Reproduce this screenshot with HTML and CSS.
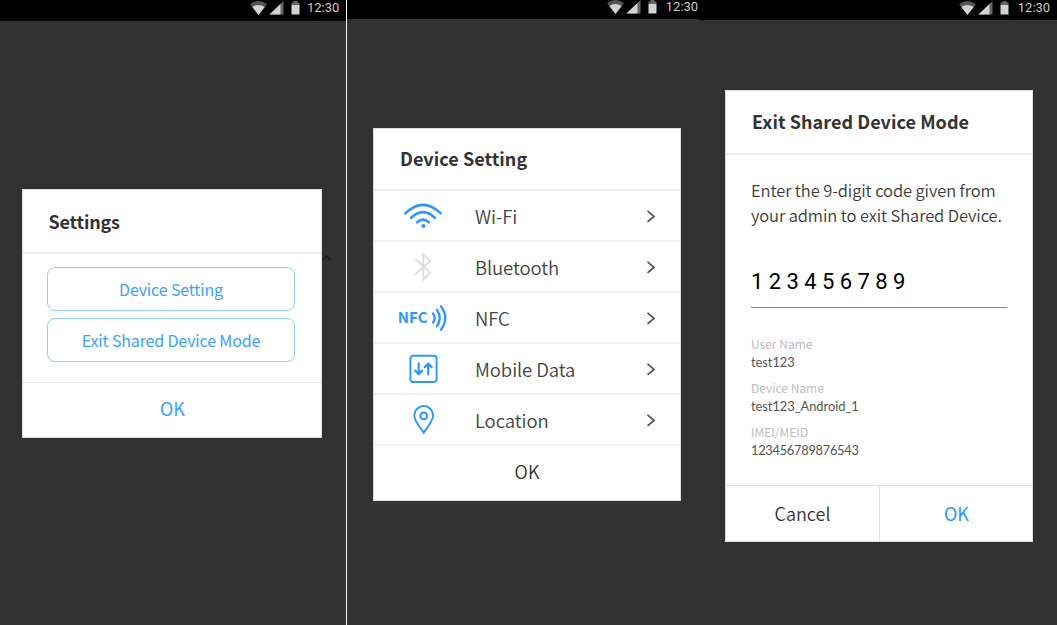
FILE: index.html
```html
<!DOCTYPE html>
<html lang="en">
<head>
<meta charset="utf-8">
<title>Shared Device Settings</title>
<link rel="stylesheet" href="styles.css">
</head>
<body>
<svg class="defs" width="0" height="0">
  <symbol id="status" viewBox="0 0 50 14">
    <path d="M0 3.2Q8.500-3 17 3.200L8.500 14Z" fill="#555"/>
    <path d="M2.300 6Q8.500 1.800 14.700 6L8.500 14Z" fill="#d2d2d2"/>
    <path d="M33.500 0V13.500H19.500Z" fill="#666"/>
    <path d="M30.500 3V13.500H19.500Z" fill="#d2d2d2"/>
    <path d="M41.500 1.500H43.500V0H47.500V1.500H49.500V4.500H41.500Z" fill="#666"/>
    <path d="M41.500 4H49.500V13.500H41.500Z" fill="#d2d2d2"/>
  </symbol>
  <symbol id="chevron" viewBox="0 0 10 14">
    <path d="M1.500 1.900L8 7.400L1.500 12.900" fill="none" stroke="#505050" stroke-width="1.700"/>
  </symbol>
</svg>
<main class="screens">
  <section class="screen screen-settings">
    <header class="status"><svg class="status-icons"><use href="#status"/></svg><span class="clock">12:30</span></header>
    <div class="dialog">
      <h2 class="title">Settings</h2>
      <div class="actions">
        <button class="outline">Device Setting</button>
        <button class="outline">Exit Shared Device Mode</button>
      </div>
      <button class="ok">OK</button>
      <svg class="caret" viewBox="0 0 9 6"><path d="M.5 5.500L4.500 1L8.500 5.500" fill="none" stroke="#181818" stroke-width="1.200"/></svg>
    </div>
  </section>
  <section class="screen screen-device">
    <header class="status"><svg class="status-icons"><use href="#status"/></svg><span class="clock">12:30</span></header>
    <div class="dialog">
      <h2 class="title">Device Setting</h2>
      <ul class="list">
        <li class="row">
          <svg class="icon" viewBox="0 0 50 32" fill="none" stroke="#2d96ff" stroke-width="2.600" stroke-linecap="round"><path d="M7.300 13.400Q25-3.800 42.700 13.400M13.200 17.800Q25 6.600 36.800 17.800M19.200 22.300Q25 17.100 30.800 22.300"/><circle cx="25.400" cy="26" r="2.100" fill="#2d96ff" stroke="none"/></svg>
          <span class="label">Wi-Fi</span><svg class="chev"><use href="#chevron"/></svg>
        </li>
        <li class="row">
          <svg class="icon" viewBox="0 0 50 32" fill="none" stroke="#dedede" stroke-width="2" stroke-linecap="round"><path d="M17.800 8.500L32.300 21.500L25.300 28.500V3.500L32.300 10L17.800 23"/></svg>
          <span class="label">Bluetooth</span><svg class="chev"><use href="#chevron"/></svg>
        </li>
        <li class="row">
          <svg class="icon" viewBox="0 0 50 32" fill="none" stroke="#2d96ff" stroke-width="2.300" stroke-linecap="round"><text class="nfc" x="-.3" y="21.200" textLength="30" fill="#2d96ff" stroke="none">NFC</text><path d="M35 11.500Q38.400 16 35 20.500M39 7.800Q44.500 16 39 24.200M43 4.300Q51.500 16 43 27.700"/></svg>
          <span class="label">NFC</span><svg class="chev"><use href="#chevron"/></svg>
        </li>
        <li class="row">
          <svg class="icon" viewBox="0 0 50 32" fill="none" stroke="#2d96ff" stroke-width="1.900" stroke-linecap="round" stroke-linejoin="round"><rect x="12.400" y="2.800" width="26.200" height="26.200" rx="2.800"/><path stroke-width="2.200" d="M20.700 10.400V20.700M17.200 17.600L20.700 21.100L24.200 17.600M30.200 21.400V10.900M26.700 14.100L30.200 10.600L33.700 14.100"/></svg>
          <span class="label">Mobile Data</span><svg class="chev"><use href="#chevron"/></svg>
        </li>
        <li class="row">
          <svg class="icon" viewBox="0 0 50 32" fill="none" stroke="#2d96ff" stroke-width="1.900"><path d="M25.700 28.700C23 24.200 16.300 17.200 16.300 11.400A9.400 9.400 0 0 1 35.100 11.400C35.100 17.200 28.500 24.200 25.700 28.700Z"/><circle cx="25.700" cy="11.900" r="3.400"/></svg>
          <span class="label">Location</span><svg class="chev"><use href="#chevron"/></svg>
        </li>
      </ul>
      <button class="ok">OK</button>
    </div>
  </section>
  <section class="screen screen-exit">
    <header class="status"><svg class="status-icons"><use href="#status"/></svg><span class="clock">12:30</span></header>
    <div class="dialog">
      <h2 class="title">Exit Shared Device Mode</h2>
      <div class="content">
        <p class="message">Enter the 9-digit code given from<br>your admin to exit Shared Device.</p>
        <div class="code">1 2 3 4 5 6 7 8 9</div>
        <dl class="info">
          <dt>User Name</dt><dd>test123</dd>
          <dt>Device Name</dt><dd>test123_Android_1</dd>
          <dt>IMEI/MEID</dt><dd class="imei">123456789876543</dd>
        </dl>
      </div>
      <div class="buttons"><button class="cancel">Cancel</button><button class="confirm">OK</button></div>
    </div>
  </section>
</main>
</body>
</html>
```

FILE: styles.css
```css
* { box-sizing: border-box; margin: 0; padding: 0; }
body { background: #323232; font-family: "Noto Sans CJK KR", "Noto Sans CJK SC", sans-serif; color: #333; overflow: hidden; }
button { font: inherit; color: #333; background: none; border: 0; display: flex; align-items: center; justify-content: center; white-space: nowrap; }
.defs { position: absolute; }
.screens { display: grid; grid-template-columns: 347px 352px 358px; height: 625px; }
.screen { display: flex; flex-direction: column; align-items: flex-start; }
.screen-settings { border-right: 1px solid #f4f4f4; }
.status { width: 100%; height: 21px; background: #000; display: flex; align-items: flex-start; padding: 1.4px 0 0 249.5px; }
.status-icons { width: 50px; height: 14px; flex: none; }
.clock { font: 13px/14px Roboto, sans-serif; color: #c8c8c8; margin-left: 7.5px; }
.screen-device .status { height: 19px; padding: 0 0 0 260px; }
.screen-exit .status { height: 20px; padding: 1px 0 0 260px; }
.screen-device .clock, .screen-exit .clock { margin-left: 8.8px; }
.dialog { background: #fff; display: flex; flex-direction: column; border: 1px solid #ddd; position: relative; }
.title { font-size: 18px; font-weight: 700; line-height: 28px; color: #333; border-bottom: 2px solid #f0f0f0; display: flex; align-items: center; white-space: nowrap; letter-spacing: .05px; }

.screen-settings .dialog { margin: 168px 0 0 22px; width: 300px; height: 249px; }
.screen-settings .title { height: 64px; padding-left: 25.5px; letter-spacing: -.2px; }
.actions { padding: 13px 26px 0 24px; height: 128px; display: flex; flex-direction: column; gap: 8px; }
.outline { height: 44px; border: 1.5px solid #97ccff; border-radius: 8px; color: #3d9fff; font-size: 16px; line-height: 24px; letter-spacing: -.15px; padding-bottom: 1px; }
.outline + .outline { margin-top: -1px; }
.ok { flex: 1; font-size: 18px; line-height: 26px; }
.screen-settings .ok { border-top: 1px solid #e8e8e8; color: #3d9fff; padding: 0 0 4px 1px; }
.caret { position: absolute; left: 299px; top: 65px; width: 9px; height: 6px; }

.screen-device .dialog { margin: 109px 0 0 26px; width: 308px; height: 373px; }
.screen-device .title { height: 62px; padding: 0 0 2px 26px; }
.list { list-style: none; }
.row { height: 51px; border-bottom: 2px solid #f2f2f2; display: flex; align-items: center; padding: 0 24px; }
.icon { width: 50px; height: 32px; flex: none; overflow: visible; }
.nfc { font: 700 15px "Noto Sans CJK KR", sans-serif; }
.label { font-size: 18.5px; line-height: 28px; margin-left: 27px; font-weight: 350; color: #444; white-space: nowrap; letter-spacing: -.08px; }
.chev { width: 10px; height: 14px; margin-left: auto; }
.screen-device .ok { font-weight: 350; padding-bottom: 5px; }

.screen-exit .dialog { margin: 70px 0 0 26px; width: 308px; height: 452px; }
.screen-exit .title { height: 64px; padding: 0 0 2px 26px; }
.content { padding: 23px 25px 0; flex: 1; }
.message { font-size: 16.500px; font-weight: 350; color: #3c3c3c; line-height: 25px; white-space: nowrap; letter-spacing: -.1px; }
.code { margin-top: 40px; height: 40px; border-bottom: 1px solid #888; font: 22px/27px Roboto, sans-serif; color: #000; white-space: nowrap; letter-spacing: -.03px; }
.info { margin-top: 27px; font-size: 12px; line-height: 18px; }
.info dt { color: #bdbdbd; }
.info dd { color: #555; font-family: Lato, sans-serif; margin-bottom: 8px; font-size: 12.8px; }
.info .imei { letter-spacing: -.25px; }
.buttons { height: 56px; border-top: 1px solid #e0e0e0; display: grid; grid-template-columns: 154px 1fr; font-size: 18px; line-height: 26px; }
.buttons button { padding-bottom: 1px; }
.cancel { border-right: 1px solid #e0e0e0; font-weight: 350; }
.buttons .confirm { color: #2d96ff; padding-left: 1px; }
```
